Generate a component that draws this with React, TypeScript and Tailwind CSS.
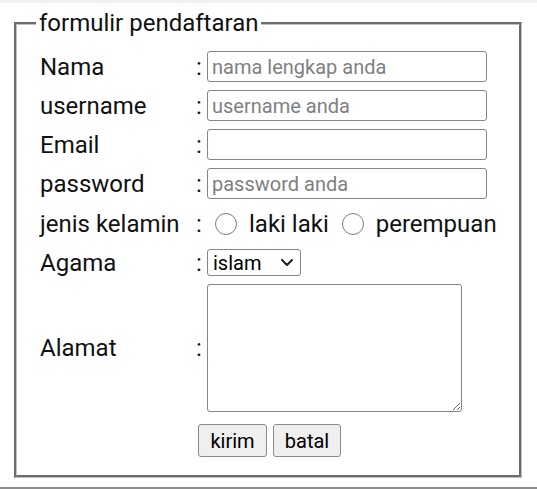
import React from "react";

const font = "font-['Roboto',sans-serif]";
const labelCls = "w-[156px] shrink-0 text-[24px] leading-[28px] text-[#111]";
const colonCls = "w-[11px] shrink-0 text-[24px] leading-[28px] text-[#111]";
const inputCls =
  "w-[280px] h-[31px] border-[1.5px] border-[#858585] rounded-[3px] px-[4px] text-[20px] text-black placeholder:text-[#808080] outline-none bg-white " +
  font;

function Row({ label, h, children }: { label: string; h: string; children: React.ReactNode }) {
  return (
    <div className={"flex items-center " + h}>
      <div className={labelCls}>{label}</div>
      <div className={colonCls}>:</div>
      <div className="flex items-center">{children}</div>
    </div>
  );
}

export default function App() {
  return (
    <div className={"w-[537px] h-[489px] bg-white overflow-hidden flex flex-col " + font}>
      <div className="h-[3px] bg-[#f0f0f0] shrink-0" />
      <fieldset className="mt-[7px] ml-[14px] mr-[15px] h-[468px] shrink-0 border-[3px] border-[#c0c0c0] [border-style:groove] pl-[19px] pr-[19px] pt-[10px]">
        <legend className="px-[3px] text-[24px] leading-[27px] text-[#111]">formulir pendaftaran</legend>
        <div className="flex flex-col pl-[4px]">
          <Row label="Nama" h="h-[39px]">
            <input className={inputCls} placeholder="nama lengkap anda" />
          </Row>
          <Row label="username" h="h-[39px]">
            <input className={inputCls} placeholder="username anda" />
          </Row>
          <Row label="Email" h="h-[39px]">
            <input className={inputCls} type="email" />
          </Row>
          <Row label="password" h="h-[39px]">
            <input className={inputCls} type="password" placeholder="password anda" />
          </Row>
          <Row label="jenis kelamin" h="h-[42px]">
            <input
              type="radio"
              name="jk"
              className="appearance-none ml-[8px] mr-[12px] w-[22px] h-[22px] rounded-full border-[1.5px] border-[#7d7d7d] bg-white"
            />
            <span className="text-[24px] leading-[28px] text-[#111]">laki laki</span>
            <input
              type="radio"
              name="jk"
              className="appearance-none ml-[13px] mr-[12px] w-[22px] h-[22px] rounded-full border-[1.5px] border-[#7d7d7d] bg-white"
            />
            <span className="text-[24px] leading-[28px] text-[#111]">perempuan</span>
          </Row>
          <Row label="Agama" h="h-[35px]">
            <div className="relative w-[94px] h-[27px]">
              <select
                className={
                  "appearance-none w-full h-full border-[1.5px] border-[#858585] rounded-[3px] pl-[5px] text-[20px] leading-[24px] text-black bg-white outline-none " +
                  font
                }
                defaultValue="islam"
              >
                <option value="islam">islam</option>
                <option value="kristen">kristen</option>
              </select>
              <svg
                className="absolute right-[8px] top-[10px] w-[12px] h-[7px] pointer-events-none"
                viewBox="0 0 12 7"
                fill="none"
              >
                <polyline points="1,1 6,6 11,1" stroke="#222" strokeWidth="2" strokeLinecap="round" strokeLinejoin="round" />
              </svg>
            </div>
          </Row>
          <Row label="Alamat" h="h-[136px]">
            <textarea className="w-[255px] h-[128px] border-[1.5px] border-[#858585] rounded-[3px] bg-white outline-none" />
          </Row>
          <div className="flex pt-[8px]">
            <div className="w-[156px] shrink-0" />
            <div className="flex gap-[6px] ml-[2px]">
              <button className="w-[69px] h-[33px] bg-[#efefef] border-[1.5px] border-[#8a8a8a] rounded-[3px] text-[20px] leading-[24px] text-black">
                kirim
              </button>
              <button className="w-[68px] h-[33px] bg-[#efefef] border-[1.5px] border-[#8a8a8a] rounded-[3px] text-[20px] leading-[24px] text-black">
                batal
              </button>
            </div>
          </div>
        </div>
      </fieldset>
      <div className="mt-[9px] h-[2px] bg-[#8c8c8c] shrink-0" />
    </div>
  );
}
